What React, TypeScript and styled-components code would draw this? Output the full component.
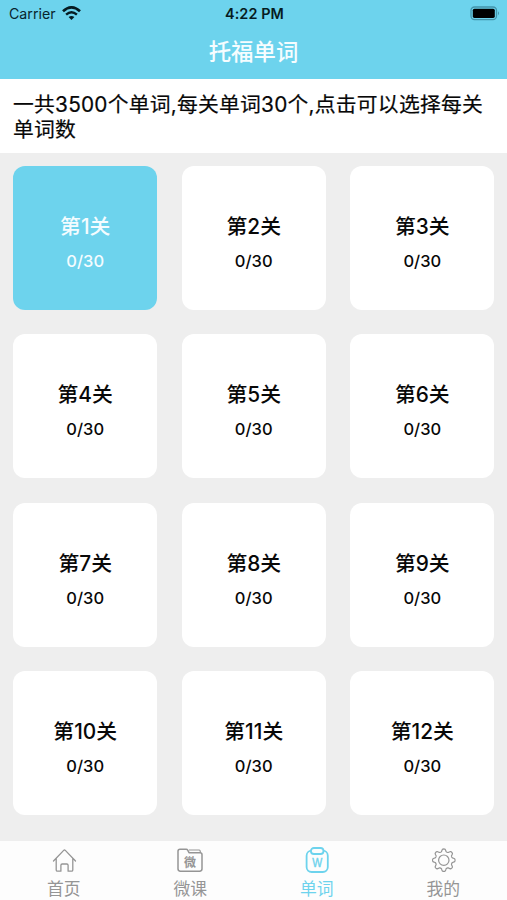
import React from "react";
import styled, { createGlobalStyle } from "styled-components";

const BLUE = "#6dd3ed";

const GlobalStyle = createGlobalStyle`
  * { box-sizing: border-box; }
  body { margin: 0; background: #eeeeee; }
`;

const Screen = styled.div`
  width: 507px;
  height: 900px;
  display: flex;
  flex-direction: column;
  overflow: hidden;
  background: #eeeeee;
  color: #080808;
  font-family: Inter, "Noto Sans CJK SC", sans-serif;
`;

const Header = styled.header`
  height: 79px;
  flex: none;
  background: ${BLUE};
`;

const StatusBar = styled.div`
  height: 27px;
  padding: 0 7px 0 9px;
  display: grid;
  grid-template-columns: 1fr auto 1fr;
  align-items: center;
  color: #08252d;
`;

const Carrier = styled.div`
  display: flex;
  align-items: center;
  gap: 6px;
  font-size: 14.2px;
  line-height: 27px;
`;

const Clock = styled.div`
  font-size: 14.4px;
  line-height: 27px;
  font-weight: 600;
  letter-spacing: 0.1px;
  color: #061b21;
`;

const BatterySlot = styled.div`
  display: flex;
  justify-content: flex-end;
`;

const Title = styled.h1`
  margin: 0;
  text-align: center;
  color: #f6fdff;
  font-size: 22.4px;
  line-height: 50px;
  font-weight: 500;
`;

const Intro = styled.p`
  margin: 0;
  height: 74px;
  flex: none;
  padding: 14px 13px 0;
  background: #fff;
  font-size: 20.8px;
  line-height: 24.5px;
  font-weight: 400;
  letter-spacing: 0.23px;
  -webkit-text-stroke: 0.2px currentColor;
`;

const Levels = styled.main`
  height: 688px;
  flex: none;
  padding: 12.5px 12.5px 0 13px;
  display: grid;
  grid-template-columns: repeat(3, 144.4px);
  grid-auto-rows: 144.2px;
  justify-content: space-between;
  align-content: start;
  row-gap: 24.4px;
`;

const Card = styled.button<{ $active: boolean }>`
  border: 0;
  margin: 0;
  padding: 11px 0 0;
  border-radius: 12px;
  display: flex;
  flex-direction: column;
  align-items: center;
  justify-content: center;
  gap: 3px;
  font-family: inherit;
  background: ${(p) => (p.$active ? BLUE : "#fff")};
  color: ${(p) => (p.$active ? "#f4fcff" : "#080808")};
`;

const LevelName = styled.span`
  font-size: 20.8px;
  line-height: 32px;
  font-weight: 500;
`;

const Progress = styled.span`
  font-size: 16.5px;
  line-height: 30px;
  font-weight: 500;
`;

const TabBar = styled.nav`
  flex: 1;
  display: grid;
  grid-template-columns: repeat(4, 126.5px);
  justify-content: center;
  background: #fdfdfd;
`;

const Tab = styled.a<{ $active?: boolean }>`
  display: flex;
  flex-direction: column;
  align-items: center;
  padding-top: 5px;
  color: ${(p) => (p.$active ? BLUE : "#959595")};
`;

const TabLabel = styled.span`
  font-size: 16.8px;
  line-height: 26px;
  margin-top: 2px;
`;

const IconText = styled.text`
  font-family: "Liberation Sans", "Noto Sans CJK SC", sans-serif;
  fill: currentColor;
  text-anchor: middle;
`;

const Wifi = () => (
  <svg width="19" height="15" viewBox="0 0 19 15" fill="none" stroke="#061b21">
    <path d="M1 5.2Q9.5-2.4 18 5.2" strokeWidth="2.7" />
    <path d="M4.1 8.7Q9.5 3.8 14.9 8.7" strokeWidth="2.4" />
    <path d="M9.5 14 6.6 11Q9.5 8.8 12.4 11Z" fill="#061b21" stroke="none" />
  </svg>
);

const Battery = () => (
  <svg width="30" height="15" viewBox="0 0 30 15">
    <rect x="1" y="1" width="25.5" height="12.6" rx="3.5" fill="none" stroke="#4394aa" strokeWidth="1.3" />
    <rect x="2.8" y="2.7" width="22" height="9.2" rx="1.6" fill="#000" />
    <path d="M28 5.2Q30 7.2 28 9.2Z" fill="#4394aa" />
  </svg>
);

const HomeIcon = () => (
  <svg width="28" height="28" viewBox="0 0 28 28" fill="none" stroke="currentColor" strokeWidth="1.3" strokeLinecap="round" strokeLinejoin="round">
    <path d="M3.5 15 13.7 4.4Q14.5 3.6 15.3 4.4L25.5 15M6.2 12.6V24Q6.2 25.2 7.5 25.2H10.9V19.3Q10.9 18 12.2 18H16.8Q18.1 18 18.1 19.3V25.2H21.5Q22.8 25.2 22.8 24V12.6" />
  </svg>
);

const FolderIcon = () => (
  <svg width="28" height="28" viewBox="0 0 28 28" fill="none" stroke="currentColor" strokeWidth="1.5" strokeLinejoin="round">
    <path d="M2 5.2Q2 3.2 4 3.2H10.2Q11.2 3.2 11.7 4.1L13 6.7H24Q26 6.7 26 8.7V22.8Q26 25.2 23.6 25.2H4.4Q2 25.2 2 22.8Z" />
    <path d="M13 4H23.2Q24.3 4 24.4 6.7" strokeWidth="1.2" />
    <IconText x="14" y="20.8" fontSize="12" fontWeight="700" stroke="none">微</IconText>
  </svg>
);

const WordIcon = () => (
  <svg width="28" height="28" viewBox="0 0 28 28" fill="none" stroke="currentColor" strokeWidth="1.8">
    <rect x="3.6" y="4.7" width="21.2" height="21.3" rx="5" />
    <rect x="7.9" y="2" width="12.6" height="6" rx="3" fill="#fdfdfd" />
    <IconText x="14.2" y="21.3" fontSize="12" textLength="10" lengthAdjust="spacingAndGlyphs" strokeWidth="0.4">W</IconText>
  </svg>
);

const gearPath =
  Array.from({ length: 96 }, (_, i) => {
    const angle = (i / 96) * Math.PI * 2;
    const wave = Math.cos(angle * 8);
    const radius = 9.9 + 1.4 * Math.tanh(wave * 1.8);
    return `${i ? "L" : "M"}${(14.8 + radius * Math.sin(angle)).toFixed(2)} ${(14.2 - radius * Math.cos(angle)).toFixed(2)}`;
  }).join("") + "Z";

const GearIcon = () => (
  <svg width="28" height="28" viewBox="0 0 28 28" fill="none" stroke="currentColor" strokeWidth="1.2" strokeLinejoin="round">
    <path d={gearPath} />
    <circle cx="14.8" cy="14.2" r="5.2" />
  </svg>
);

const tabs = [
  { label: "首页", Icon: HomeIcon },
  { label: "微课", Icon: FolderIcon },
  { label: "单词", Icon: WordIcon, active: true },
  { label: "我的", Icon: GearIcon },
];

export default function App() {
  return (
    <>
      <GlobalStyle />
      <Screen lang="zh-CN">
        <Header>
          <StatusBar>
            <Carrier>
              Carrier
              <Wifi />
            </Carrier>
            <Clock>4:22 PM</Clock>
            <BatterySlot>
              <Battery />
            </BatterySlot>
          </StatusBar>
          <Title>托福单词</Title>
        </Header>
        <Intro>一共3500个单词,每关单词30个,点击可以选择每关单词数</Intro>
        <Levels>
          {Array.from({ length: 12 }, (_, i) => (
            <Card key={i} $active={i === 0}>
              <LevelName>第{i + 1}关</LevelName>
              <Progress>0/30</Progress>
            </Card>
          ))}
        </Levels>
        <TabBar>
          {tabs.map(({ label, Icon, active }) => (
            <Tab key={label} $active={active}>
              <Icon />
              <TabLabel>{label}</TabLabel>
            </Tab>
          ))}
        </TabBar>
      </Screen>
    </>
  );
}
